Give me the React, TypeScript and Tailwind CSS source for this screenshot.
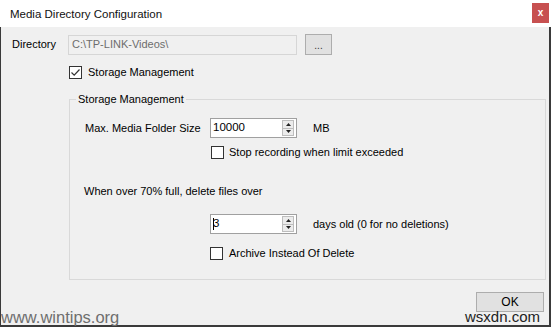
import React from "react";

function Checkbox({ checked }: { checked?: boolean }) {
  return (
    <span className="w-[13px] h-[13px] border border-[#333333] bg-white flex items-center justify-center shrink-0">
      {checked && (
        <svg width="11" height="11" viewBox="0 0 11 11">
          <path d="M1.5 5.5 L4.2 8.2 L9.5 2.5" fill="none" stroke="#333" strokeWidth="1.2" />
        </svg>
      )}
    </span>
  );
}

function Spinner({ value, caret }: { value: string; caret?: boolean }) {
  return (
    <div className="w-[87px] h-[20px] bg-white border border-[#a0a0a0] flex items-center justify-between pl-[2px] pr-[2px]">
      <span className="text-[11.5px] text-black leading-none flex items-center">
        {caret && <span className="w-px h-[12px] bg-black mr-[-1px]" />}
        {value}
      </span>
      <div className="flex flex-col w-[12px] h-[16px] border border-[#bdbdbd] bg-[#ececec]">
        <div className="flex-1 flex items-center justify-center border-b border-[#bdbdbd]">
          <svg width="5" height="3" viewBox="0 0 5 3"><path d="M0 3 L2.5 0 L5 3 Z" fill="#222" /></svg>
        </div>
        <div className="flex-1 flex items-center justify-center">
          <svg width="5" height="3" viewBox="0 0 5 3"><path d="M0 0 L2.5 3 L5 0 Z" fill="#222" /></svg>
        </div>
      </div>
    </div>
  );
}

export default function App() {
  return (
    <div
      className="w-[551px] h-[327px] bg-[#f0f0f0] relative overflow-hidden text-[11px] text-black whitespace-nowrap"
      style={{ fontFamily: '"Liberation Sans", Arial, sans-serif' }}
    >
      {/* Title bar */}
      <div className="h-[27px] bg-white flex items-start justify-between pl-[10px] pr-[2px]">
        <span className="text-[11.5px] text-[#111] mt-[6px]">Media Directory Configuration</span>
        <div className="w-[17px] h-[20px] mt-[3px] bg-[#c75050] flex items-center justify-center text-white text-[10px] font-bold leading-none">
          x
        </div>
      </div>

      {/* Body */}
      <div className="h-[300px] border-l border-r-2 border-b-2 border-[#3a3a3a] flex flex-col">
        {/* Directory row */}
        <div className="flex items-center mt-[7px] pl-[11px] h-[21px]">
          <span className="w-[56px]">Directory</span>
          <div className="w-[229px] h-[20px] border border-[#d6d6d6] bg-[#f0f0f0] flex items-center pl-[3px] text-[#6d6d6d]">
            C:\TP-LINK-Videos\
          </div>
          <div className="ml-[8px] w-[27px] h-[21px] border border-[#adadad] bg-[#e1e1e1] flex items-end justify-center pb-[3px] text-[10px] leading-none text-[#333]">
            ...
          </div>
        </div>

        {/* Storage Management checkbox */}
        <div className="flex items-center gap-[6px] ml-[68px] mt-[11px] h-[13px]">
          <Checkbox checked />
          <span>Storage Management</span>
        </div>

        {/* Group box */}
        <div className="relative ml-[68px] mt-[20px] w-[477px] h-[181px] border border-[#d9d9d9] flex flex-col pl-[15px]">
          <span className="absolute -top-[8px] left-[6px] px-[2px] bg-[#f0f0f0] leading-[14px]">
            Storage Management
          </span>

          <div className="flex items-center mt-[18px] h-[20px]">
            <span className="w-[125px]">Max. Media Folder Size</span>
            <Spinner value="10000" />
            <span className="ml-[16px]">MB</span>
          </div>

          <div className="flex items-center gap-[5px] ml-[126px] mt-[8px] h-[13px]">
            <Checkbox />
            <span>Stop recording when limit exceeded</span>
          </div>

          <div className="mt-[25px] h-[14px] flex items-center -ml-px">
            When over 70% full, delete files over
          </div>

          <div className="flex items-center mt-[16px] h-[20px] ml-[125px]">
            <Spinner value="3" caret />
            <span className="ml-[16px]">days old (0 for no deletions)</span>
          </div>

          <div className="flex items-center gap-[6px] ml-[125px] mt-[13px] h-[13px]">
            <Checkbox />
            <span>Archive Instead Of Delete</span>
          </div>
        </div>

        {/* OK button */}
        <div className="flex justify-end pr-[5px] mt-[12px]">
          <div className="w-[68px] h-[20px] border border-[#adadad] bg-[#e1e1e1] flex items-center justify-center text-[12px]">
            OK
          </div>
        </div>
      </div>

      {/* watermarks */}
      <span className="absolute left-[1px] bottom-[2px] text-[16.5px] leading-none text-[#6e6e6e]">
        www.wintips.org
      </span>
      <span className="absolute right-[11px] bottom-[3px] text-[15px] leading-none text-[#222]">
        wsxdn.com
      </span>
    </div>
  );
}
